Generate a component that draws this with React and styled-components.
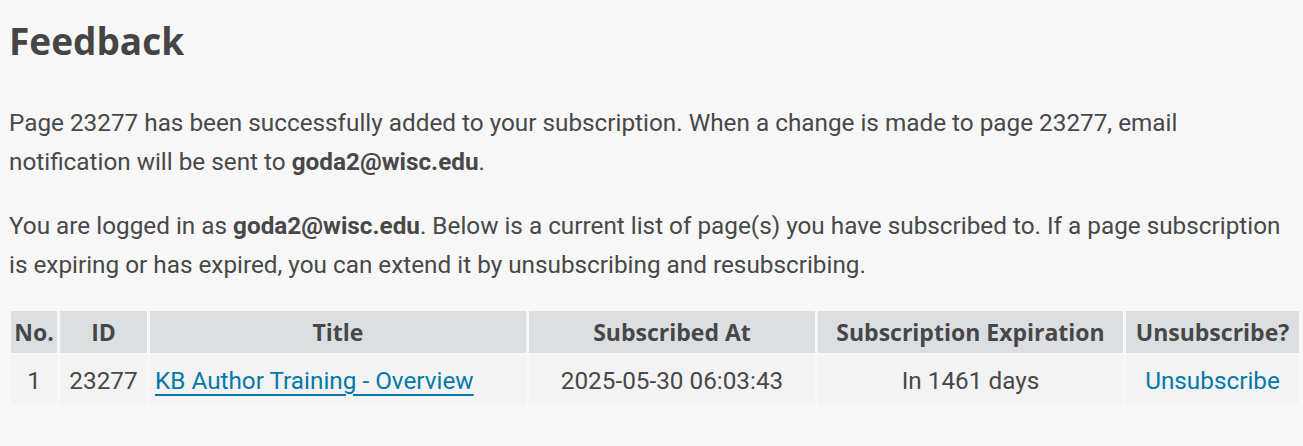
import styled, { createGlobalStyle } from "styled-components";

const GlobalStyle = createGlobalStyle`
  html, body {
    margin: 0;
    padding: 0;
    background: #f7f7f7;
  }
  body {
    font-family: "Roboto", "Liberation Sans", sans-serif;
    color: #484848;
  }
`;

const rows = [
  {
    no: 1,
    id: 23277,
    title: "KB Author Training - Overview",
    subscribedAt: "2025-05-30 06:03:43",
    expiration: "In 1461 days",
  },
];

const columns = [
  { label: "No.", width: 46 },
  { label: "ID", width: 87 },
  { label: "Title", width: 376 },
  { label: "Subscribed At", width: 286 },
  { label: "Subscription Expiration", width: 305 },
  { label: "Unsubscribe?", width: 173 },
];

const App = () => {
  const email = "goda2@wisc.edu";
  return (
    <>
      <GlobalStyle />
      <Page>
        <Heading>Feedback</Heading>
        <Paragraph>
          Page 23277 has been successfully added to your subscription. When a
          change is made to page 23277, email notification will be sent to{" "}
          <strong>{email}</strong>.
        </Paragraph>
        <Paragraph>
          You are logged in as <strong>{email}</strong>. Below is a current list
          of page(s) you have subscribed to. If a page subscription is expiring
          or has expired, you can extend it by unsubscribing and resubscribing.
        </Paragraph>
        <Table>
          <thead>
            <tr>
              {columns.map((c) => (
                <Th key={c.label} $width={c.width}>
                  {c.label}
                </Th>
              ))}
            </tr>
          </thead>
          <tbody>
            {rows.map((r) => (
              <tr key={r.id}>
                <Td>{r.no}</Td>
                <Td>{r.id}</Td>
                <Td $align="left">
                  <TitleLink href="#">{r.title}</TitleLink>
                </Td>
                <Td>{r.subscribedAt}</Td>
                <Td>{r.expiration}</Td>
                <Td>
                  <PlainLink href="#">Unsubscribe</PlainLink>
                </Td>
              </tr>
            ))}
          </tbody>
        </Table>
      </Page>
    </>
  );
};

export default App;

const Page = styled.main`
  padding: 19px 0 40px 9px;
`;

const Heading = styled.h1`
  font-family: "Open Sans", "Liberation Sans", sans-serif;
  font-size: 37px;
  font-weight: 700;
  line-height: 44px;
  margin: 0 0 40px;
  color: #454545;
`;

const Paragraph = styled.p`
  font-size: 24.3px;
  line-height: 39px;
  margin: 0 0 25px;
  max-width: 1290px;

  strong {
    font-weight: 700;
  }
`;

const Table = styled.table`
  border-collapse: separate;
  border-spacing: 3px 2px;
  margin-left: -1px;
  width: 1294px;
  table-layout: fixed;
  font-size: 24.3px;
`;

const Th = styled.th`
  width: ${({ $width }) => $width}px;
  height: 42px;
  padding: 0;
  background: #dbdfe2;
  font-family: "Open Sans", "Liberation Sans", sans-serif;
  font-weight: 700;
  font-size: 23px;
  text-align: center;
  white-space: nowrap;
  color: #474747;
`;

const Td = styled.td`
  height: 50px;
  padding: 0 5px;
  background: #f3f3f3;
  text-align: ${({ $align }) => $align || "center"};
  white-space: nowrap;
`;

const TitleLink = styled.a`
  color: #0479a8;
  text-decoration: underline;
  text-decoration-thickness: 2px;
  text-underline-offset: 5px;
`;

const PlainLink = styled.a`
  color: #0479a8;
  text-decoration: none;
`;
